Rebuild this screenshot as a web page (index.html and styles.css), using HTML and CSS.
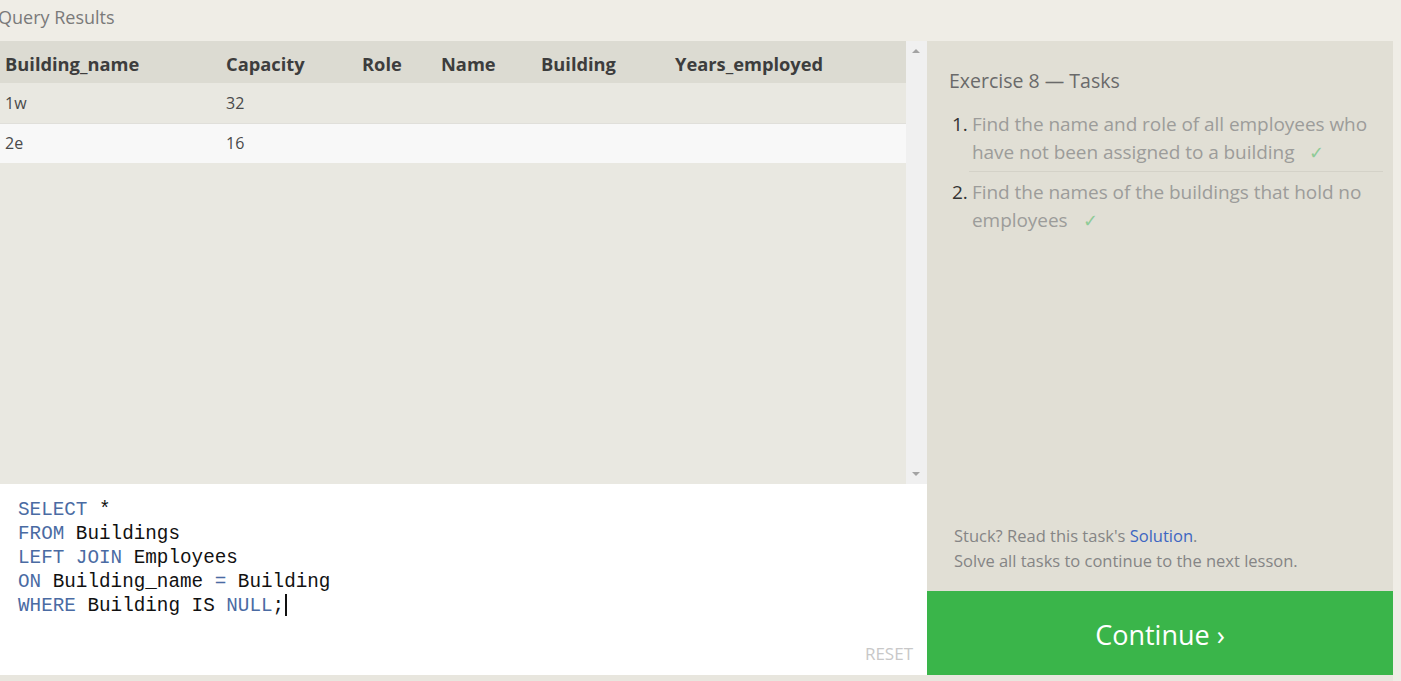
FILE: index.html
```html
<!DOCTYPE html>
<html>
<head>
<meta charset="utf-8">
<link rel="stylesheet" href="styles.css">
</head>
<body>
<div class="page">
  <div class="title">Query Results</div>
  <div class="main">
    <div class="left">
      <div class="results">
        <div class="table-wrap">
          <table class="table">
            <thead>
              <tr><th class="c1">Building_name</th><th class="c2">Capacity</th><th class="c3">Role</th><th class="c4">Name</th><th class="c5">Building</th><th class="c6">Years_employed</th></tr>
            </thead>
            <tbody>
              <tr class="odd"><td>1w</td><td>32</td><td></td><td></td><td></td><td></td></tr>
              <tr class="even"><td>2e</td><td>16</td><td></td><td></td><td></td><td></td></tr>
            </tbody>
          </table>
        </div>
        <div class="scrollbar">
          <span class="arrow up"></span>
          <span class="arrow down"></span>
        </div>
      </div>
      <div class="editor">
        <pre class="code"><span class="kw">SELECT</span> *
<span class="kw">FROM</span> Buildings
<span class="kw">LEFT JOIN</span> Employees
<span class="kw">ON</span> Building_name <span class="kw">=</span> Building
<span class="kw">WHERE</span> Building IS <span class="kw">NULL</span>;<span class="cursor"></span></pre>
        <div class="reset">RESET</div>
      </div>
    </div>
    <div class="right">
      <div class="tasks">
        <div class="tasks-title">Exercise 8 — Tasks</div>
        <ol class="task-list">
          <li><span class="num">1.</span><span class="task-text">Find the name and role of all employees who have not been assigned to a building<span class="check">✓</span></span></li>
          <li><span class="num">2.</span><span class="task-text">Find the names of the buildings that hold no employees<span class="check">✓</span></span></li>
        </ol>
        <div class="help">
          <div>Stuck? Read this task's <span class="link">Solution</span>.</div>
          <div>Solve all tasks to continue to the next lesson.</div>
        </div>
      </div>
      <div class="continue">Continue ›</div>
    </div>
  </div>
  <div class="bottom"></div>
</div>
</body>
</html>
```
FILE: styles.css
```css
* { box-sizing: border-box; }
html, body { margin: 0; padding: 0; }
body {
  background: #efede6;
  font-family: "Open Sans", "Noto Sans", sans-serif;
  width: 1401px;
  height: 681px;
  overflow: hidden;
}
.page { display: flex; flex-direction: column; }
.title {
  height: 41px;
  font-size: 18px;
  color: #7a7a7a;
  padding-top: 5px;
  margin-left: -2px;
}
.main {
  display: flex;
  height: 634px;
}
.left {
  width: 927px;
  display: flex;
  flex-direction: column;
}
.results {
  height: 443px;
  display: flex;
  background: #e9e8e1;
}
.table-wrap { width: 906px; }
.table {
  border-collapse: collapse;
  width: 906px;
  table-layout: fixed;
}
.table th {
  height: 42px;
  background: #dcdbd2;
  text-align: left;
  font-weight: 700;
  font-size: 18.3px;
  color: #3d3d3d;
  padding: 3px 0 0 5px;
}
.c1 { width: 221px; }
.c2 { width: 136px; }
.c3 { width: 79px; }
.c4 { width: 100px; }
.c5 { width: 134px; }
.table td {
  height: 40px;
  font-size: 16px;
  color: #4a4a4a;
  padding: 0 0 0 5px;
}
.odd { background: #e9e8e1; }
.even { background: #f8f8f8; border-top: 1px solid #e0dfda; }
.scrollbar {
  width: 21px;
  background: #f0f0f0;
  position: relative;
}
.arrow {
  position: absolute;
  left: 6px;
  width: 0; height: 0;
  border-left: 4px solid transparent;
  border-right: 4px solid transparent;
}
.arrow.up { top: 8px; border-bottom: 4px solid #a3a3a3; }
.arrow.down { bottom: 8px; border-top: 4px solid #a3a3a3; }
.editor {
  flex: 1;
  background: #ffffff;
  position: relative;
  padding: 14px 0 0 18px;
}
.code {
  margin: 0;
  font-family: "Liberation Mono", "DejaVu Sans Mono", monospace;
  font-size: 19.3px;
  line-height: 24px;
  color: #111;
}
.kw { color: #4a6ba3; }
.cursor {
  display: inline-block;
  width: 2px;
  height: 22px;
  background: #111;
  vertical-align: -5px;
  margin-left: 1px;
}
.reset {
  position: absolute;
  right: 14px;
  bottom: 10px;
  font-size: 17px;
  color: #c8c8c8;
}
.right {
  width: 466px;
  display: flex;
  flex-direction: column;
}
.tasks {
  flex: 1;
  background: #e1dfd5;
  padding: 25px 10px 18px 22px;
  display: flex;
  flex-direction: column;
}
.tasks-title {
  font-size: 19.5px;
  color: #6a6a6a;
  margin-bottom: 16px;
  padding-top: 1px;
}
.task-list {
  list-style: none;
  margin: 0;
  padding: 0 0 0 3px;
}
.task-list li {
  display: flex;
  font-size: 19px;
  line-height: 28px;
  letter-spacing: -0.05px;
  padding-bottom: 5px;
}
.task-list li + li {
  border-top: 1px solid #d4d2c8;
  padding-top: 6px;
  margin-left: 17px;
}
.task-list li + li .num { margin-left: -17px; }
.num { color: #333; width: 20px; flex: none; }
.task-text { color: #9c9c9a; }
.check { color: #8fcb97; margin-left: 15px; font-size: 18px; }
.help {
  margin-top: auto;
  font-size: 16.5px;
  line-height: 25px;
  color: #858585;
  padding-left: 5px;
}
.link { color: #3d66c2; }
.continue {
  height: 84px;
  background: #3ab54a;
  color: #ffffff;
  font-size: 27px;
  padding-top: 3px;
  display: flex;
  align-items: center;
  justify-content: center;
}
.bottom {
  height: 6px;
  background: #e8e6de;
  width: 1393px;
}
```
